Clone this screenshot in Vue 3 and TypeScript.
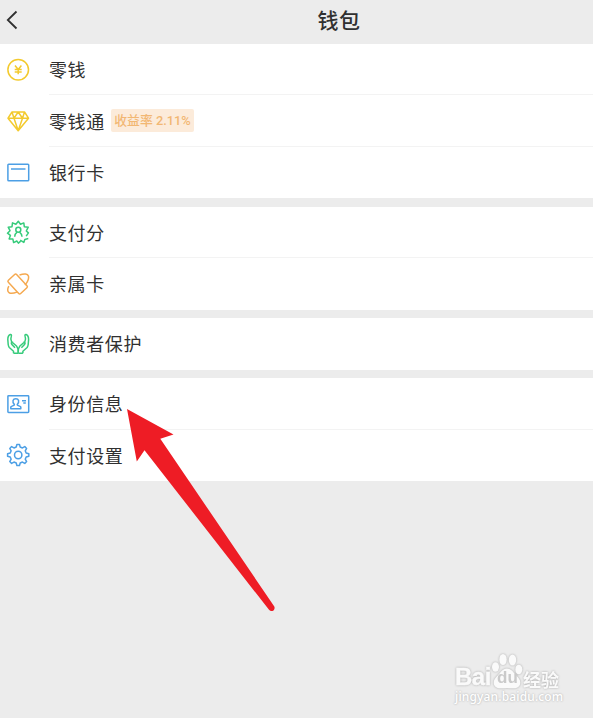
<script setup lang="ts">
interface Item {
  icon: string
  label: string
  badge?: string
}

const groups: Item[][] = [
  [
    { icon: 'coin', label: '零钱' },
    { icon: 'diamond', label: '零钱通', badge: '收益率 2.11%' },
    { icon: 'card', label: '银行卡' },
  ],
  [
    { icon: 'score', label: '支付分' },
    { icon: 'family', label: '亲属卡' },
  ],
  [{ icon: 'hands', label: '消费者保护' }],
  [
    { icon: 'identity', label: '身份信息' },
    { icon: 'gear', label: '支付设置' },
  ],
]

// Outline of an eight-toothed cog centred in a 24px box.
function cogPath(): string {
  const points: string[] = []
  for (let i = 0; i < 8; i++) {
    const steps: [number, number][] = [[-14, 8.2], [-7, 10.7], [7, 10.7], [14, 8.2]]
    for (const [offset, radius] of steps) {
      const angle = ((i * 45 + offset) * Math.PI) / 180
      points.push(`${(12.2 + radius * Math.sin(angle)).toFixed(2)} ${(12 - radius * Math.cos(angle)).toFixed(2)}`)
    }
  }
  return `M${points.join('L')}Z`
}

const cog = cogPath()
</script>

<template>
  <main class="wallet">
    <header class="bar">
      <svg class="back" viewBox="0 0 12 20"><path d="M10.500 1.500 1.800 10l8.700 8.500" /></svg>
      <h1 class="title">钱包</h1>
    </header>

    <section v-for="(group, g) in groups" :key="g" class="group">
      <div v-for="item in group" :key="item.label" class="row">
        <svg class="icon" :class="item.icon" viewBox="0 0 24 24">
          <template v-if="item.icon === 'coin'">
            <circle cx="12.200" cy="11.700" r="10.300" />
            <path d="m9 7.500 3.200 4 3.200-4M12.200 11.500v4.700M8.700 11.500h7M8.700 13.900h7" />
          </template>
          <template v-else-if="item.icon === 'diamond'">
            <path d="M6 3h12.500l4 6.200L12.200 21.800 2 9.200ZM2 9.200h20.500M6 3l2 6.200 4.200 12.600 4.300-12.600 2-6.200M8 9.200 12.200 3l4.300 6.200" />
          </template>
          <template v-else-if="item.icon === 'card'">
            <rect x="1.900" y="4.300" width="20.800" height="16.500" rx=".8" />
            <path d="M5 9h14.500" />
          </template>
          <template v-else-if="item.icon === 'score'">
            <path d="M20.200 16.200 22.400 12.900 20.300 11 22.200 7.200 18.300 6.700 17.800 2.900 14.500 4.300 12.300 1.300 9.900 4.300 6.500 2.900 6 6.700 2.200 7.200 4 10.700 1.500 13.200 4.400 15.400 3.100 18.900 6.900 19.100 7.600 22.600 10.800 21 12.400 23.100 14.700 21.200" />
            <path d="m14.200 20.200 3.600 2.200 1-3 3.500-.8" />
            <circle cx="12.300" cy="9.800" r="2.500" />
            <path d="M8.700 16.800c0-2.300 1-3.700 2.400-4.700M13.500 12.100c1.400 1 2.400 2.400 2.500 4.700" />
          </template>
          <template v-else-if="item.icon === 'family'">
            <rect x="6" y="3" width="11.300" height="18" rx="1.400" transform="rotate(-43 11.650 12)" />
            <path d="M13.500 3c5-1.800 8.200-1.300 8.900.9.700 2.500-.4 5.500-3.400 9.100M2.800 14.200C1.400 17 1.500 19.500 3 20.600c1.800 1.300 5 .6 8-.5" />
          </template>
          <template v-else-if="item.icon === 'hands'">
            <path d="M7.500 21.200v-2L3.300 15.500Q2.400 14.300 2.200 12.500L1.800 7.500C1.800 4.700 2.800 3 4.300 2.500c1-.2 1.400.6 1 1.700-.7 1.700-.4 3.900.3 5.600l4.900 4.200c1.400 1.500 1.800 4 1.700 6.500M7.500 21.200h4.700M9 15.800 5.900 12.400c-1.100-1.200-.4-3.200 1-2.200" />
            <path d="M16.900 21.200v-2l4.200-3.700q.9-1.200 1.100-3l.4-5c0-2.800-1-4.500-2.500-5-1-.2-1.400.6-1 1.700.7 1.700.4 3.900-.3 5.600l-4.900 4.200c-1.400 1.500-1.800 4-1.700 6.500M16.900 21.200h-4.700M15.400 15.800l3.100-3.400c1.100-1.200.4-3.200-1-2.200" />
          </template>
          <template v-else-if="item.icon === 'identity'">
            <rect x="1.900" y="3.700" width="20.800" height="16.800" rx=".7" />
            <path d="M8.400 12.500C5.700 9.600 7 6.800 9.800 6.800s4.100 2.800 1.400 5.700c-.2 1.300 3.300 1.300 3.600 2.500v1.700h-10V15c.3-1.200 3.800-1.200 3.600-2.500ZM16 8.700h4M17.300 11h2.500" />
          </template>
          <template v-else>
            <path :d="cog" />
            <circle cx="12.200" cy="12" r="3.700" />
          </template>
        </svg>
        <div class="content">
          <span class="label">{{ item.label }}</span>
          <span v-if="item.badge" class="badge">{{ item.badge }}</span>
        </div>
      </div>
    </section>

    <svg class="pointer" viewBox="0 0 150 206">
      <path d="M2 3 48.500 28.500 35.300 32.800 149.300 200.500Q150.200 203 148.500 204.500 146 206 144 203.800L19.500 44.300 11.800 55.500Z" />
    </svg>

    <div class="watermark">
      <div class="brand">
        <span class="bai">Bai</span>
        <span class="paw">
          <svg viewBox="0 0 32 36">
            <ellipse cx="4.500" cy="14" rx="3.500" ry="4.800" />
            <ellipse cx="12" cy="6.500" rx="3.700" ry="5.500" />
            <ellipse cx="21.500" cy="7" rx="3.700" ry="5.500" />
            <ellipse cx="27.800" cy="16.500" rx="3.500" ry="4.800" />
            <path d="M16 15.500c4.500 0 6.200 4 8.900 6.500 3.300 3.300 5.100 5.600 4.100 9.400-1.200 4.300-6.500 4.100-13 3.500-6.500.6-11.800.8-13-3.500-1-3.800.8-6.100 4.100-9.400 2.700-2.500 4.400-6.500 8.900-6.500Z" />
          </svg>
          <span class="du">du</span>
        </span>
        <span class="jingyan">经验</span>
      </div>
      <div class="site">jingyan.baidu.com</div>
    </div>
  </main>
</template>

<style>
body {
  margin: 0;
  background: #ececec;
}
</style>

<style scoped>
.wallet {
  position: relative;
  height: 718px;
  overflow: hidden;
  background: #ececec;
  color: #303030;
  font-family: "Noto Sans CJK SC", sans-serif;
}
.bar {
  display: flex;
  align-items: center;
  height: 44px;
  box-sizing: border-box;
  padding: 0 0 4px 6px;
}
.back {
  flex: none;
  width: 12px;
  height: 20px;
  fill: none;
  stroke: #303030;
  stroke-width: 1.8;
}
.title {
  flex: 1;
  margin: 0;
  padding: 0 0 2px 67px;
  font-size: 21px;
  line-height: 30px;
  font-weight: 500;
  letter-spacing: 0.500px;
  text-align: center;
}
.group {
  margin-bottom: 8.600px;
  background: #fff;
}
.row {
  display: flex;
  align-items: center;
  gap: 19px;
  height: 51.400px;
  padding-left: 6px;
}
.icon {
  flex: none;
  width: 24px;
  height: 24px;
  fill: none;
  stroke-width: 1.5;
  stroke-linejoin: round;
}
.coin,
.diamond {
  stroke: #f3ca2e;
}
.card,
.identity,
.gear {
  stroke: #4c9fe5;
}
.score,
.hands {
  stroke: #36cb7b;
}
.family {
  stroke: #f5a950;
}
.content {
  display: flex;
  flex: 1;
  align-items: center;
  height: 100%;
  box-sizing: border-box;
  border-bottom: 1px solid #f3f3f3;
}
.row:last-child .content {
  border-bottom-color: transparent;
}
.label {
  font-size: 18px;
  line-height: 26px;
  letter-spacing: 0.600px;
}
.badge {
  height: 23px;
  margin-left: 6px;
  padding: 0 3.500px;
  border-radius: 2px;
  background: #fcebda;
  color: #f2b773;
  font-family: Roboto, "Noto Sans CJK SC", sans-serif;
  font-size: 12.800px;
  line-height: 24px;
  font-weight: 500;
  white-space: pre;
}
.pointer {
  position: absolute;
  left: 125px;
  top: 406px;
  width: 150px;
  height: 206px;
  fill: #ee1c25;
}
.watermark {
  position: absolute;
  left: 455px;
  top: 653px;
  width: 120px;
  color: #fafafa;
}
.brand {
  display: flex;
  align-items: flex-end;
  height: 36px;
  filter: drop-shadow(0 0 0.800px #a8a8a8);
}
.bai {
  width: 36px;
  font: bold 24px/24px "Liberation Sans", sans-serif;
  letter-spacing: -0.500px;
  -webkit-text-stroke: 0.400px #fafafa;
}
.paw {
  position: relative;
  width: 32px;
  height: 36px;
}
.paw svg {
  display: block;
  width: 32px;
  height: 36px;
  fill: #fafafa;
}
.du {
  position: absolute;
  left: 6px;
  top: 16px;
  color: #cacaca;
  font: bold 17px/18px "Liberation Sans", sans-serif;
}
.jingyan {
  font-size: 18px;
  line-height: 20px;
  font-weight: 700;
}
.site {
  padding-top: 1px;
  color: #fff;
  font: 500 12px/14px "Noto Sans", sans-serif;
  letter-spacing: 0.150px;
  text-shadow: 0 0 2px #bcbcbc, 0 0 2px #c8c8c8;
}
</style>
